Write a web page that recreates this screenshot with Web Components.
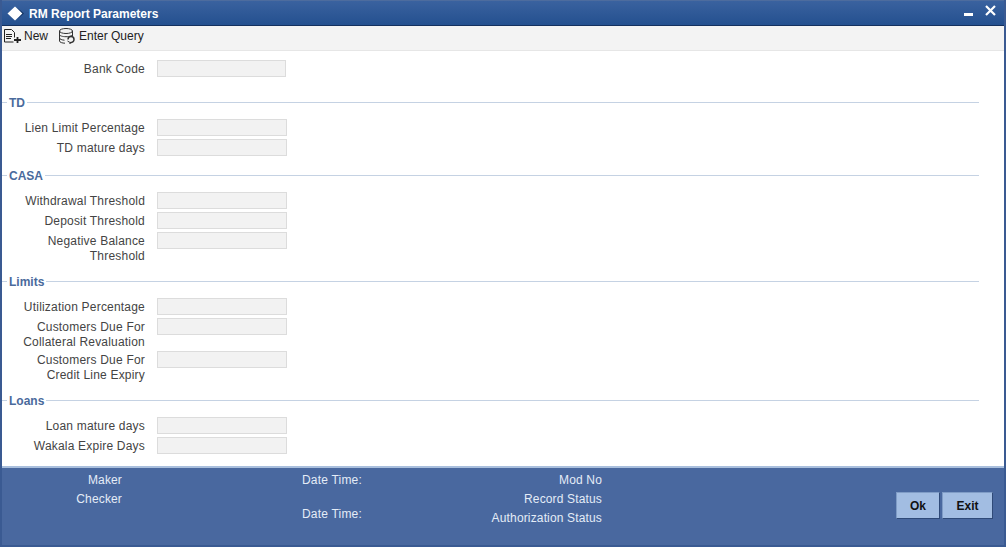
<!DOCTYPE html>
<html>
<head>
<meta charset="utf-8">
<title>RM Report Parameters</title>
<style>
html, body { margin: 0; height: 100%; }
body { font-family: "Liberation Sans", Arial, sans-serif; overflow: hidden; }
</style>
</head>
<body>
<template id="rm-field-tpl">
<style>
:host { display: grid; grid-template-columns: 143px 130px; column-gap: 12px; font-size: 12px; line-height: 15px; color: #444; letter-spacing: .2px; }
.label { text-align: right; padding-top: 2px; margin-bottom: -2px; }
.box { height: 17px; background: #f2f2f2; border: 1px solid #dcdcdc; box-sizing: border-box; width: var(--box-width, 130px); }
</style>
<div class="label"><slot></slot></div>
<div class="box"></div>
</template>

<template id="rm-section-tpl">
<style>
:host { display: block; padding-right: 25px; margin-bottom: 12px; }
.head { display: flex; align-items: center; height: 15px; font: bold 12px/15px "Liberation Sans", Arial, sans-serif; color: #4a6a9c; }
.head::before { content: ""; width: 5px; height: 1px; background: #c5d2e3; }
.head::after { content: ""; flex: 1; height: 1px; background: #c5d2e3; margin-left: 2px; }
.title { padding: 2px 0 0 2px; }
.rows { display: flex; flex-direction: column; gap: 3px; padding-top: 9px; }
</style>
<div class="head"><span class="title"></span></div>
<div class="rows"><slot></slot></div>
</template>

<template id="rm-window-tpl">
<style>
:host { display: flex; flex-direction: column; height: 547px; width: 1006px; box-sizing: border-box; border-left: 2px solid #3a5a92; border-right: 2px solid #3a5a92; border-bottom: 2px solid #3a5a92; background: #fff; }
.title { height: 26px; flex: none; box-sizing: border-box; padding: 0 0 0 5px; display: flex; align-items: center; gap: 5px; background: linear-gradient(#3a629f, #24508f); border-top: 1px solid #4d6c9e; border-bottom: 1px solid #14305e; color: #fff; font-weight: bold; font-size: 12px; }
.title .name { flex: 1; padding-top: 2px; }
.controls { display: flex; align-items: flex-start; gap: 12px; padding-right: 8px; align-self: stretch; }
.toolbar { height: 25px; flex: none; box-sizing: border-box; padding: 0 0 4px 2px; display: flex; align-items: center; gap: 11px; background: #f3f3f3; border-bottom: 1px solid #e6e6e6; font-size: 12px; color: #222; }
.body { flex: 1; padding-top: 9px; }
.footer { flex: none; height: 79px; background: #49689f; border-top: 2px solid #a9bfdd; box-sizing: border-box; display: flex; }
</style>
<div class="title">
  <svg width="17" height="15" viewBox="0 0 17 15"><path d="M8 .5 15.5 7.5 8 14.5 .5 7.5Z" fill="#fff"/><path d="M10 1.5 17 7.5 10 13.5 15.5 7.5Z" fill="#16345f"/></svg>
  <span class="name"><slot name="title"></slot></span>
  <div class="controls">
    <svg width="9" height="3" viewBox="0 0 9 3" style="margin-top:12px"><rect width="9" height="3" fill="#fff"/></svg>
    <svg width="11" height="11" viewBox="0 0 11 11" style="margin-top:4px"><path d="M1 1 10 10M10 1 1 10" stroke="#fff" stroke-width="2.2" fill="none"/></svg>
  </div>
</div>
<div class="toolbar"><slot name="tools"></slot></div>
<div class="body"><slot></slot></div>
<div class="footer"><slot name="footer"></slot></div>
</template>

<template id="rm-audit-tpl">
<style>
:host { display: block; flex: 1; position: relative; color: #e4ecf7; font-size: 12px; line-height: 15px; letter-spacing: .15px; }
.t { position: absolute; white-space: nowrap; }
.r { text-align: right; }
.d { letter-spacing: .2px; }
button { position: absolute; top: 24px; height: 27px; background: #a2bde2; border: 1px solid; border-color: #7f9cc6 #2f4a78 #2f4a78 #7f9cc6; font: bold 12px "Liberation Sans", Arial, sans-serif; color: #111; padding: 0; }
</style>
<span class="t r" style="right:882px;top:5px">Maker</span>
<span class="t r" style="right:882px;top:24px">Checker</span>
<span class="t d" style="left:300px;top:5px">Date Time:</span>
<span class="t d" style="left:300px;top:39px">Date Time:</span>
<span class="t r" style="right:402px;top:5px">Mod No</span>
<span class="t r" style="right:402px;top:24px">Record Status</span>
<span class="t r" style="right:402px;top:43px">Authorization Status</span>
<button style="left:894px;width:44px">Ok</button>
<button style="left:940px;width:51px">Exit</button>
</template>

<rm-window>
  <span slot="title">RM Report Parameters</span>
  <rm-tool slot="tools" icon="new">New</rm-tool>
  <rm-tool slot="tools" icon="query">Enter Query</rm-tool>

  <rm-field style="margin-bottom:18px;--box-width:129px">Bank Code</rm-field>
  <rm-section name="TD">
    <rm-field>Lien Limit Percentage</rm-field>
    <rm-field>TD mature days</rm-field>
  </rm-section>
  <rm-section name="CASA">
    <rm-field>Withdrawal Threshold</rm-field>
    <rm-field>Deposit Threshold</rm-field>
    <rm-field>Negative Balance<br>Threshold</rm-field>
  </rm-section>
  <rm-section name="Limits">
    <rm-field>Utilization Percentage</rm-field>
    <rm-field>Customers Due For<br>Collateral Revaluation</rm-field>
    <rm-field>Customers Due For<br>Credit Line Expiry</rm-field>
  </rm-section>
  <rm-section name="Loans">
    <rm-field>Loan mature days</rm-field>
    <rm-field>Wakala Expire Days</rm-field>
  </rm-section>
  <rm-audit slot="footer"></rm-audit>
</rm-window>

<script>
'use strict';

const icons = {
	new: '<svg width="17" height="14" viewBox="0 0 17 14" fill="none" stroke="#222"><path d="M.5 .5h7l3 3v5M.5 .5v12.5h9"/><path d="M2 5.5h6M2 7.5h6M2 9.5h5" stroke-width="1"/><path d="M13.5 8v6M10 11h7" stroke-width="1.8"/></svg>',
	query: '<svg width="17" height="16" viewBox="1 0 17 16" fill="none" stroke="#333"><ellipse cx="8" cy="3" rx="6.5" ry="2.5"/><path d="M1.5 3v10c0 1.3 3 2.2 5.5 2.2M1.5 6.5c0 1.3 3 2.2 6.5 2.2s6.5-.9 6.5-2.2M1.5 10c0 1.2 2.5 2 5 2.2M14.5 3v5"/><path d="M10 11.5a3 3 0 0 1 6 0c0 2-2 3-4 3.2" stroke-width="1.5"/><path d="M9.5 13l3 1.8-1 1.2" stroke-width="1"/></svg>'
};

function simple(tag, tplId, setup) {
	customElements.define(tag, class extends HTMLElement {
		constructor() {
			super();
			const shadow = this.attachShadow({mode: 'open'});
			shadow.appendChild(document.getElementById(tplId).content.cloneNode(true));
			if (setup) setup(this, shadow);
		}
	});
}

simple('rm-window', 'rm-window-tpl');
simple('rm-field', 'rm-field-tpl');
simple('rm-audit', 'rm-audit-tpl');
simple('rm-section', 'rm-section-tpl', (el, shadow) => {
	shadow.querySelector('.title').textContent = el.getAttribute('name');
});

class RmTool extends HTMLElement {
	constructor() {
		super();
		const shadow = this.attachShadow({mode: 'open'});
		shadow.innerHTML = `<style>:host { display: flex; align-items: center; gap: 3px; }</style>${icons[this.getAttribute('icon')]}<slot></slot>`;
	}
}
customElements.define('rm-tool', RmTool);
</script>
</body>
</html>
